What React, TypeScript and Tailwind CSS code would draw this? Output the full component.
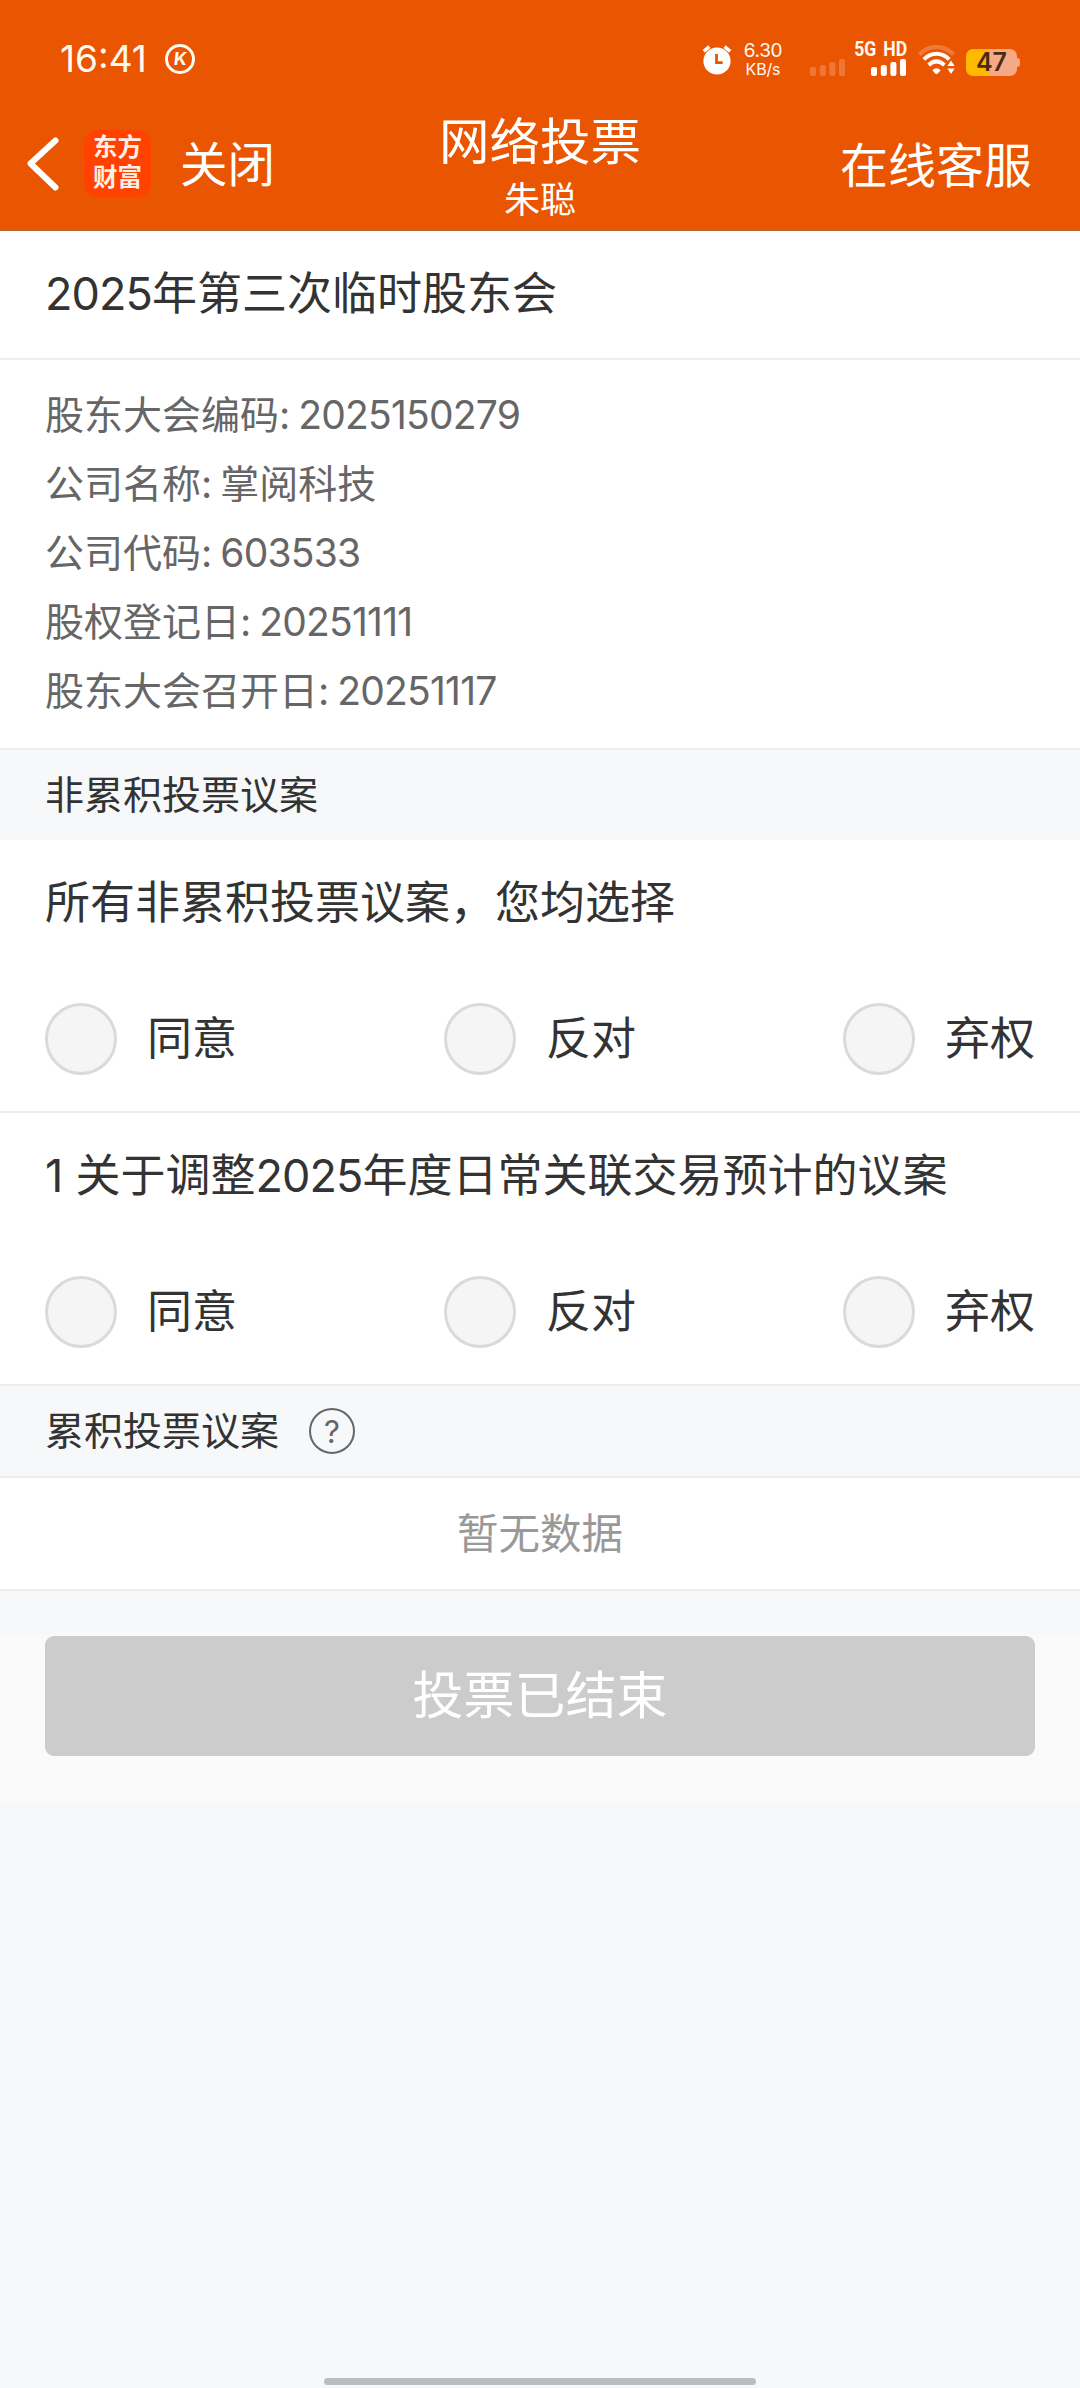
import React from "react";

const num = "font-['Inter','Noto_Sans_CJK_SC',sans-serif]";

function Digits({ children }: { children: string }) {
  return <span className={`${num} tracking-[-0.020em]`}>{children}</span>;
}

function AlarmIcon() {
  return (
    <svg className="h-[30px] w-[30px]" viewBox="0 0 30 30" fill="none">
      <circle cx="15" cy="16" r="13.6" fill="#fff" />
      <path d="M1.8 6.4 7.4 1.6M28.2 6.4 22.6 1.6" stroke="#fff" strokeWidth="3.4" />
      <path d="M14.5 9v8.7h6.2" stroke="#ea5502" strokeWidth="2.8" />
    </svg>
  );
}

function SignalBars({ className }: { className: string }) {
  return (
    <svg className={className} viewBox="0 0 36 17" fill="#fff">
      <rect x="0" y="8" width="6" height="9" rx="2" />
      <rect x="9.8" y="6" width="6" height="11" rx="2" />
      <rect x="19.4" y="3" width="6" height="14" rx="2" />
      <rect x="29" y="0" width="6" height="17" rx="2" />
    </svg>
  );
}

function WifiIcon() {
  return (
    <svg className="h-[30px] w-[38px]" viewBox="0 0 38 30" fill="none">
      <path d="M1.4 9.6C11.5-.6 25.500-.6 35.600 9.600" stroke="#fff" strokeOpacity=".22" strokeWidth="4.200" />
      <path d="M5.800 14.400C13.500 6.900 23.500 6.900 31.200 14.400" stroke="#fff" strokeWidth="4" />
      <path d="M10.600 20C15.700 15.300 21.300 15.300 26.400 20" stroke="#fff" strokeWidth="4" />
      <path d="M14.300 25.200q4.200-3.800 8.400 0l-3.200 3.600q-1 .9-2 0z" fill="#fff" />
      <path d="M33 15.500 36.600 21h-7.200zM33 29l3.600-5.500h-7.200z" fill="#fff" />
    </svg>
  );
}

function StatusBar() {
  return (
    <div className="flex h-[102px] items-start justify-between pr-[60px] pl-[60px] text-[#fffaf2]">
      <div className="flex pt-[40px]">
        <span className={`${num} mt-[-1px] w-[105px] text-[37px] leading-10`}>16:41</span>
        <span className={`${num} mt-1 flex size-[30px] items-center justify-center rounded-full border-[3px] border-[#fffaf2] text-[18px] leading-none font-bold`}>
          <span className="-skew-x-6">K</span>
        </span>
      </div>
      <div className="flex">
        <div className="mt-[45px]">
          <AlarmIcon />
        </div>
        <div className={`${num} mt-[43px] ml-[11px] w-[40px] text-center`}>
          <div className="text-[19px] leading-4 tracking-[-0.02em]">6.30</div>
          <div className="mt-[2px] text-[16px] leading-4 tracking-[-0.01em]">KB/s</div>
        </div>
        <SignalBars className="mt-[59px] ml-[27px] h-[17px] w-[36px] opacity-20" />
        <div className="mt-[41px] ml-[11px] flex w-[50px] flex-col items-end">
          <div className="origin-right scale-x-[.88] text-right font-['Roboto',sans-serif] text-[20px] leading-4 font-bold whitespace-nowrap [word-spacing:3px]">5G HD</div>
          <SignalBars className="mt-[2px] h-[17px] w-[36px]" />
        </div>
        <div className="mt-[45px] ml-[11px]">
          <WifiIcon />
        </div>
        <div className="mt-[47px] ml-[10px] flex items-center">
          <div className={`${num} flex h-[27px] w-[51px] items-center justify-center rounded-[7px] bg-[linear-gradient(90deg,#ffb900_0_24px,#f5a985_24px)] text-[25px] leading-none font-semibold text-[#4b2b17]`}>
            47
          </div>
          <div className="h-[9px] w-[3px] rounded-r-sm bg-[#f5a985]" />
        </div>
      </div>
    </div>
  );
}

function NavBar() {
  return (
    <div className="grid h-[129px] grid-cols-[1fr_auto_1fr] text-white">
      <div className="flex items-start pl-[26px]">
        <svg className="mt-[34px] h-[56px] w-[34px]" viewBox="0 0 34 56" fill="none" stroke="#fff" strokeWidth="6" strokeLinecap="round" strokeLinejoin="round">
          <path d="M29.500 4.500 4.500 27.500 29.500 51.500" />
        </svg>
        <div className="mt-[28px] ml-6 flex h-[67px] w-[67px] flex-col items-center justify-center rounded-[14px] bg-[#ff4200] pb-[5px] text-[24.500px] leading-[30px] font-bold text-[#ffeee6]">
          <span>东方</span>
          <span>财富</span>
        </div>
        <span className="mt-[36px] ml-[29px] text-[47.500px] leading-[48px]">关闭</span>
      </div>
      <div className="flex flex-col items-center">
        <span className="mt-[10px] text-[50.500px] leading-[52px]">网络投票</span>
        <span className="mt-[15px] text-[36px] leading-9">朱聪</span>
      </div>
      <span className="mt-[36px] pr-[48px] text-right text-[48px] leading-[48px]">在线客服</span>
    </div>
  );
}

const details: { label: string; value: React.ReactNode }[] = [
  { label: "股东大会编码", value: <Digits>2025150279</Digits> },
  { label: "公司名称", value: "掌阅科技" },
  { label: "公司代码", value: <Digits>603533</Digits> },
  { label: "股权登记日", value: <Digits>20251111</Digits> },
  { label: "股东大会召开日", value: <Digits>20251117</Digits> },
];

function Ballot({ title, className }: { title: React.ReactNode; className: string }) {
  return (
    <section className={`bg-white px-[45px] ${className}`}>
      <h2 className="h-[163px] pt-[30px] text-[45px] leading-[60px] whitespace-nowrap">{title}</h2>
      <div className="flex justify-between">
        {["同意", "反对", "弃权"].map((option) => (
          <label key={option} className="flex items-center gap-[30px]">
            <span className="size-[72px] rounded-full border-[3px] border-[#dadada] bg-[#f5f5f5]" />
            <span className="pb-[6px] text-[45px] leading-[60px]">{option}</span>
          </label>
        ))}
      </div>
    </section>
  );
}

export default function App() {
  return (
    <div className="flex h-[2388px] w-[1080px] flex-col bg-[#f6f8fa] font-['Noto_Sans_CJK_SC',sans-serif] text-[#333]">
      <header className="h-[231px] border-b border-[#b8653a] bg-[#ea5502]">
        <StatusBar />
        <NavBar />
      </header>

      <h1 className="h-[129px] border-b-2 border-[#eee] bg-white px-[45px] pt-[30px] text-[45px] leading-[60px]">
        <Digits>2025</Digits>年第三次临时股东会
      </h1>

      <dl className="h-[390px] border-b-2 border-[#eee] bg-white px-[45px] pt-[18px] text-[39px] leading-[69px] text-[#666]">
        {details.map((d) => (
          <div key={d.label} className="flex h-[69px]">
            <dt>{d.label}</dt>
            <dd>
              <span className={`${num} mr-[8px]`}>:</span>
              {d.value}
            </dd>
          </div>
        ))}
      </dl>

      <h3 className="h-[90px] px-[45px] text-[39px] leading-[85px]">非累积投票议案</h3>

      <Ballot className="h-[273px] border-b-2 border-[#eee]" title="所有非累积投票议案，您均选择" />
      <Ballot
        className="h-[273px] border-b-2 border-[#eee]"
        title={
          <>
            <Digits>1</Digits>
            <span className="ml-[13px]">关于调整</span>
            <Digits>2025</Digits>年度日常关联交易预计的议案
          </>
        }
      />

      <div className="flex h-[92px] items-center gap-[30px] border-b-2 border-[#eee] px-[45px]">
        <h3 className="pb-[5px] text-[39px] leading-[85px]">累积投票议案</h3>
        <span className={`${num} flex size-[46px] items-center justify-center rounded-full border-[2.500px] border-[#666] text-[31px] leading-none text-[#666]`}>
          ?
        </span>
      </div>

      <p className="h-[113px] border-b-2 border-[#eee] bg-white text-center text-[41.500px] leading-[106px] text-[#999]">暂无数据</p>

      <div className="mt-[43px] h-[168px] bg-[#fafafa] px-[45px] pt-[2px]">
        <button className="flex h-[120px] w-full justify-center rounded-[9px] bg-[#ccc] text-[51px] leading-[112px] text-white">投票已结束</button>
      </div>

      <div className="mx-auto mt-auto mb-[3px] h-[7px] w-[432px] rounded-full bg-[#babcbd]" />
    </div>
  );
}
